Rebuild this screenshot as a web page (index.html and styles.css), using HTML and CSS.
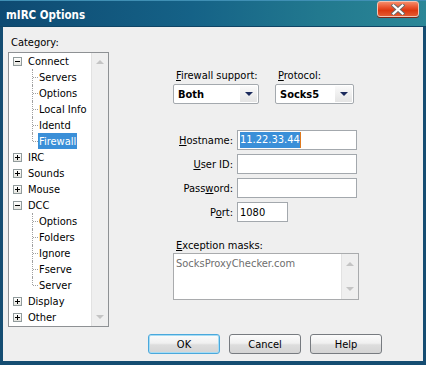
FILE: index.html
```html
<!DOCTYPE html>
<html>
<head>
    <title>mIRC Options</title>
    <link rel="stylesheet" href="styles.css">
</head>
<body>
    <div class="window">
        <div class="titlebar">
            <span class="title">mIRC Options</span>
            <span class="close">
                <svg width="14" height="11" viewBox="0 0 14 11">
                    <path d="M2.5 1.5 L11.5 9.5 M11.5 1.5 L2.5 9.5" stroke="#6a6a6a" stroke-width="4" stroke-linecap="square"/>
                    <path d="M2.5 1.5 L11.5 9.5 M11.5 1.5 L2.5 9.5" stroke="#ffffff" stroke-width="2.2" stroke-linecap="square"/>
                </svg>
            </span>
        </div>

        <div class="content">
            <div class="main">
                <div class="category">
                    <div class="cat-label">Category:</div>
                    <div class="tree">
                        <ul class="nodes">
                            <li class="node"><span class="exp"><i class="h"></i></span><span class="text">Connect</span></li>
                            <li class="child"><span class="text">Servers</span></li>
                            <li class="child"><span class="text">Options</span></li>
                            <li class="child"><span class="text">Local Info</span></li>
                            <li class="child"><span class="text">Identd</span></li>
                            <li class="child last"><span class="text selected">Firewall</span></li>
                            <li class="node"><span class="exp"><i class="h"></i><i class="v"></i></span><span class="text">IRC</span></li>
                            <li class="node"><span class="exp"><i class="h"></i><i class="v"></i></span><span class="text">Sounds</span></li>
                            <li class="node"><span class="exp"><i class="h"></i><i class="v"></i></span><span class="text">Mouse</span></li>
                            <li class="node"><span class="exp"><i class="h"></i></span><span class="text">DCC</span></li>
                            <li class="child"><span class="text">Options</span></li>
                            <li class="child"><span class="text">Folders</span></li>
                            <li class="child"><span class="text">Ignore</span></li>
                            <li class="child"><span class="text">Fserve</span></li>
                            <li class="child last"><span class="text">Server</span></li>
                            <li class="node"><span class="exp"><i class="h"></i><i class="v"></i></span><span class="text">Display</span></li>
                            <li class="node"><span class="exp"><i class="h"></i><i class="v"></i></span><span class="text">Other</span></li>
                        </ul>
                        <div class="vscroll">
                            <span class="arrow up"></span>
                            <span class="arrow down"></span>
                        </div>
                    </div>
                </div>

                <div class="panel">
                    <div class="combos">
                        <div class="field">
                            <span class="label"><u>F</u>irewall support:</span>
                            <div class="combo support"><span class="value">Both</span><span class="drop"></span></div>
                        </div>
                        <div class="field">
                            <span class="label"><u>P</u>rotocol:</span>
                            <div class="combo protocol"><span class="value">Socks5</span><span class="drop"></span></div>
                        </div>
                    </div>

                    <div class="form">
                        <span class="flabel"><u>H</u>ostname:</span>
                        <div class="input"><span class="sel">11.22.33.44</span><span class="caret"></span></div>
                        <span class="flabel"><u>U</u>ser ID:</span>
                        <div class="input"></div>
                        <span class="flabel">Pass<u>w</u>ord:</span>
                        <div class="input"></div>
                        <span class="flabel">P<u>o</u>rt:</span>
                        <div class="input port">1080</div>
                    </div>

                    <div class="masks">
                        <span class="label"><u>E</u>xception masks:</span>
                        <div class="listbox">
                            <div class="items">SocksProxyChecker.com</div>
                            <div class="vscroll">
                                <span class="arrow up"></span>
                                <span class="arrow down"></span>
                            </div>
                        </div>
                    </div>
                </div>
            </div>

            <div class="buttons">
                <button class="btn focus">OK</button>
                <button class="btn">Cancel</button>
                <button class="btn">Help</button>
            </div>
        </div>
    </div>
</body>
</html>
```

FILE: styles.css
```css
body {
    margin: 0;
    font-family: "DejaVu Sans Condensed", "Liberation Sans", sans-serif;
    font-size: 11px;
    color: #000;
}
.window {
    width: 426px;
    height: 365px;
    display: flex;
    flex-direction: column;
    background: #154d72;
}
.titlebar {
    height: 27px;
    display: flex;
    justify-content: space-between;
    align-items: flex-start;
    padding: 0 7px 0 6px;
    box-sizing: border-box;
    background: linear-gradient(to right, #0e4a72, #156287 45%, #22798f 75%, #2b8797);
    box-shadow: inset 0 1px 0 #3f8fb4, inset 0 -1px 0 #0f4566;
}
.title {
    color: #fff;
    font-weight: bold;
    font-size: 11.5px;
    line-height: 14px;
    margin-top: 8px;
}
.close {
    width: 42px;
    height: 16px;
    margin-top: 1px;
    box-sizing: border-box;
    border: 1px solid #f4c4b4;
    border-radius: 3px;
    background: linear-gradient(#f58b68, #e9502a 40%, #dc3810 60%, #e45a30);
    box-shadow: 0 1px 0 #7a2a1a;
    display: flex;
    align-items: center;
    justify-content: center;
}
.content {
    flex: 1;
    margin: 0 3px 4px;
    background: #efefef;
    padding: 8px 0 0 5px;
    display: flex;
    flex-direction: column;
}
.main {
    display: flex;
}
.category {
    width: 101px;
}
.cat-label {
    line-height: 13px;
    margin-left: 3px;
    margin-bottom: 4px;
    padding-top: 1px;
}
.tree {
    height: 275px;
    box-sizing: border-box;
    border: 1px solid #8e9194;
    background: #fff;
    display: flex;
    margin-top: -1px;
}
.nodes {
    list-style: none;
    margin: 0;
    padding: 0;
    flex: 1;
}
.nodes li {
    height: 16px;
    display: flex;
    align-items: center;
    position: relative;
}
.node {
    padding-left: 4px;
}
.exp {
    width: 9px;
    height: 9px;
    box-sizing: border-box;
    border: 1px solid #919b9c;
    background: linear-gradient(#fff, #e6e6e0);
    margin-right: 6px;
    position: relative;
}
.exp .h {
    position: absolute;
    left: 1px;
    top: 3px;
    width: 5px;
    height: 1px;
    background: #000;
}
.exp .v {
    position: absolute;
    left: 3px;
    top: 1px;
    width: 1px;
    height: 5px;
    background: #000;
}
.child {
    padding-left: 29px;
}
.child::before {
    content: "";
    position: absolute;
    left: 23px;
    top: 0;
    height: 16px;
    border-left: 1px dotted #a0a0a0;
}
.child.last::before {
    height: 8px;
}
.child::after {
    content: "";
    position: absolute;
    left: 24px;
    top: 8px;
    width: 5px;
    border-top: 1px dotted #a0a0a0;
}
.text {
    line-height: 16px;
    padding-top: 1px;
}
.child .text {
    padding: 1px 1px 0;
    line-height: 15px;
}
.selected {
    background: #3a8fd8;
    color: #fff;
}
.vscroll {
    width: 17px;
    background: #efefef;
    border-left: 1px solid #e2e2e2;
    box-sizing: border-box;
    display: flex;
    flex-direction: column;
    justify-content: space-between;
    align-items: center;
    padding: 7px 0;
}
.arrow {
    width: 0;
    height: 0;
    border-left: 4px solid transparent;
    border-right: 4px solid transparent;
}
.arrow.up {
    border-bottom: 4px solid #c4c4c4;
}
.arrow.down {
    border-top: 4px solid #c4c4c4;
}
.panel {
    margin-left: 64px;
    margin-top: 34px;
}
.combos {
    display: flex;
    gap: 16px;
}
.field {
    display: flex;
    flex-direction: column;
}
.label {
    line-height: 13px;
    margin-left: 3px;
    margin-bottom: 2px;
}
.combo {
    height: 20px;
    box-sizing: border-box;
    border: 1px solid #a4a9ae;
    border-radius: 2px;
    background: #fff;
    display: flex;
    align-items: center;
    justify-content: space-between;
    font-weight: bold;
}
.combo.support {
    width: 86px;
}
.combo.protocol {
    width: 79px;
}
.value {
    padding-left: 4px;
}
.drop {
    width: 17px;
    height: 16px;
    margin-right: 1px;
    background: linear-gradient(#fafafa, #e4e4e4);
    display: flex;
    align-items: center;
    justify-content: center;
}
.drop::after {
    content: "";
    border-left: 4px solid transparent;
    border-right: 4px solid transparent;
    border-top: 4px solid #1b2a5c;
}
.form {
    margin-top: 26px;
    display: grid;
    grid-template-columns: 60px 120px;
    column-gap: 4px;
    row-gap: 4px;
    align-items: center;
}
.flabel {
    text-align: right;
}
.input {
    height: 20px;
    box-sizing: border-box;
    border: 1px solid #a3a8ad;
    background: #fff;
    padding-left: 2px;
    display: flex;
    align-items: center;
}
.input.port {
    width: 51px;
}
.sel {
    background: #3a8fd8;
    color: #fff;
    line-height: 16px;
}
.caret {
    width: 1px;
    height: 16px;
    background: #e07a1e;
}
.masks {
    margin-top: 17px;
    display: flex;
    flex-direction: column;
}
.masks .label {
    margin-bottom: 1px;
}
.listbox {
    width: 186px;
    height: 47px;
    box-sizing: border-box;
    border: 1px solid #a9abad;
    background: #fff;
    display: flex;
}
.listbox .items {
    flex: 1;
    color: #6e6e6e;
    padding: 3px 0 0 2px;
    line-height: 13px;
}
.listbox .vscroll {
    padding: 8px 0;
}
.buttons {
    display: flex;
    gap: 9px;
    margin-top: 7px;
    padding-left: 140px;
}
.btn {
    width: 72px;
    height: 20px;
    box-sizing: border-box;
    border: 1px solid #777b80;
    border-radius: 3px;
    background: linear-gradient(#fcfcfc, #f0f0f0 45%, #dddddd 55%, #d4d4d4);
    font-family: inherit;
    font-size: 11px;
    color: #000;
    padding: 0;
}
.btn.focus {
    border-color: #4aa8dc;
    box-shadow: inset 0 0 0 1px #a6dcf4;
}
```
